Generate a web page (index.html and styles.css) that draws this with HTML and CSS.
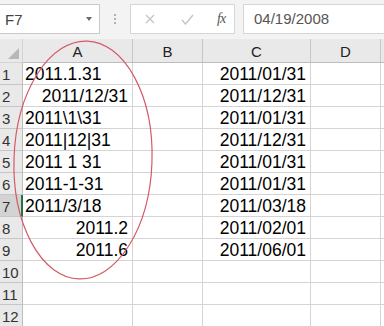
FILE: index.html
```html
<!DOCTYPE html>
<html lang="en">
<head>
    <meta charset="UTF-8">
    <title>Date sheet</title>
    <link rel="stylesheet" href="styles.css">
</head>
<body>
    <div class="toolbar">
        <div class="namebox">
            <span>F7</span>
            <span class="caret"></span>
        </div>
        <div class="grip"><i></i><i></i><i></i></div>
        <div class="fbuttons">
            <svg class="btn-x" width="10" height="10" viewBox="0 0 10 10"><path d="M1 1 L9 9 M9 1 L1 9" stroke="#c4c4c4" stroke-width="1.3" fill="none"/></svg>
            <svg class="btn-ok" width="13" height="11" viewBox="0 0 13 11"><path d="M1 6 L4.5 10 L12 1" stroke="#c4c4c4" stroke-width="1.4" fill="none"/></svg>
            <span class="fx">fx</span>
        </div>
        <div class="finput">04/19/2008</div>
    </div>

    <div class="sheet">
        <div class="grid">
            <div class="corner"><span class="tri"></span></div>
            <div class="colhead">A</div>
            <div class="colhead">B</div>
            <div class="colhead">C</div>
            <div class="colhead">D</div>
            <div class="colhead"></div>

            <div class="rowhead">1</div>
            <div class="cell">2011.1.31</div><div class="cell"></div><div class="cell num">2011/01/31</div><div class="cell"></div><div class="cell"></div>
            <div class="rowhead">2</div>
            <div class="cell num">2011/12/31</div><div class="cell"></div><div class="cell num">2011/12/31</div><div class="cell"></div><div class="cell"></div>
            <div class="rowhead">3</div>
            <div class="cell">2011\1\31</div><div class="cell"></div><div class="cell num">2011/01/31</div><div class="cell"></div><div class="cell"></div>
            <div class="rowhead">4</div>
            <div class="cell">2011|12|31</div><div class="cell"></div><div class="cell num">2011/12/31</div><div class="cell"></div><div class="cell"></div>
            <div class="rowhead">5</div>
            <div class="cell">2011 1 31</div><div class="cell"></div><div class="cell num">2011/01/31</div><div class="cell"></div><div class="cell"></div>
            <div class="rowhead">6</div>
            <div class="cell">2011-1-31</div><div class="cell"></div><div class="cell num">2011/01/31</div><div class="cell"></div><div class="cell"></div>
            <div class="rowhead active">7</div>
            <div class="cell">2011/3/18</div><div class="cell"></div><div class="cell num">2011/03/18</div><div class="cell"></div><div class="cell"></div>
            <div class="rowhead">8</div>
            <div class="cell num">2011.2</div><div class="cell"></div><div class="cell num">2011/02/01</div><div class="cell"></div><div class="cell"></div>
            <div class="rowhead">9</div>
            <div class="cell num">2011.6</div><div class="cell"></div><div class="cell num">2011/06/01</div><div class="cell"></div><div class="cell"></div>
            <div class="rowhead">10</div>
            <div class="cell"></div><div class="cell"></div><div class="cell"></div><div class="cell"></div><div class="cell"></div>
            <div class="rowhead">11</div>
            <div class="cell"></div><div class="cell"></div><div class="cell"></div><div class="cell"></div><div class="cell"></div>
            <div class="rowhead">12</div>
            <div class="cell"></div><div class="cell"></div><div class="cell"></div><div class="cell"></div><div class="cell"></div>
        </div>

        <!-- hand drawn circle around column A -->
        <svg class="ring" width="384" height="287" viewBox="0 39 384 287">
            <ellipse cx="83" cy="160" rx="69" ry="119" transform="rotate(2 83 160)" fill="none" stroke="#d45a66" stroke-width="1.2"/>
        </svg>
    </div>
</body>
</html>
```

FILE: styles.css
```css
body {
    margin: 0;
    width: 384px;
    height: 326px;
    overflow: hidden;
    background: #fff;
    font-family: "Liberation Sans", Arial, sans-serif;
    color: #000;
}

.toolbar {
    height: 39px;
    background: #f3f3f3;
    display: flex;
    align-items: flex-start;
    box-sizing: border-box;
    padding-top: 4px;
}
.namebox {
    width: 100px;
    height: 30px;
    box-sizing: border-box;
    background: #fff;
    border: 1px solid #c9c9c9;
    border-left: none;
    display: flex;
    align-items: center;
    justify-content: space-between;
    padding: 0 7px 0 5px;
    font-size: 15px;
    color: #444;
}
.caret {
    width: 0;
    height: 0;
    border-left: 3px solid transparent;
    border-right: 3px solid transparent;
    border-top: 4px solid #6a6a6a;
}
.grip {
    width: 30px;
    height: 30px;
    display: flex;
    flex-direction: column;
    align-items: center;
    justify-content: center;
    gap: 2px;
}
.grip i {
    width: 2px;
    height: 2px;
    background: #b0b0b0;
}
.fbuttons {
    width: 105px;
    height: 30px;
    box-sizing: border-box;
    background: #fff;
    border: 1px solid #d6d6d6;
    display: flex;
    align-items: center;
    padding-left: 14px;
}
.btn-x {
    margin-right: 26px;
}
.btn-ok {
    margin-right: 23px;
}
.fx {
    font-family: "Liberation Serif", serif;
    font-style: italic;
    font-size: 14px;
    color: #555;
    letter-spacing: -1px;
}
.finput {
    margin-left: 8px;
    flex: 1;
    height: 30px;
    box-sizing: border-box;
    background: #fff;
    border: 1px solid #d6d6d6;
    border-right: none;
    padding-left: 10px;
    font-size: 15px;
    line-height: 28px;
    color: #555;
}

.sheet {
    position: relative;
}
.grid {
    display: grid;
    grid-template-columns: 23px 110px 70px 108px 70px 1fr;
    grid-template-rows: 24px;
    grid-auto-rows: 22px;
}
.grid > div {
    box-sizing: border-box;
    border-right: 1px solid #d4d4d4;
    border-bottom: 1px solid #d4d4d4;
    white-space: nowrap;
    overflow: visible;
}
.corner {
    background: #e9e9e9;
    position: relative;
}
.tri {
    position: absolute;
    right: 3px;
    bottom: 3px;
    width: 0;
    height: 0;
    border-left: 11px solid transparent;
    border-bottom: 11px solid #b8b8b8;
}
.grid > .colhead {
    background: #e9e9e9;
    border-right-color: #c6c6c6;
    border-bottom-color: #bdbdbd;
    text-align: center;
    font-size: 15px;
    line-height: 26px;
    color: #222;
}
.grid > .rowhead {
    background: #e9e9e9;
    border-right-color: #bdbdbd;
    border-bottom-color: #c6c6c6;
    font-size: 15px;
    line-height: 23px;
    padding-left: 2px;
    color: #333;
}
.grid > .rowhead.active {
    background: #d3d3d3;
    border-right: 2px solid #217346;
}
.cell {
    font-size: 17.5px;
    line-height: 22px;
    padding: 0 2px;
}
.cell.num {
    text-align: right;
    padding-right: 4px;
}

.ring {
    position: absolute;
    left: 0;
    top: 0;
    pointer-events: none;
}
```
